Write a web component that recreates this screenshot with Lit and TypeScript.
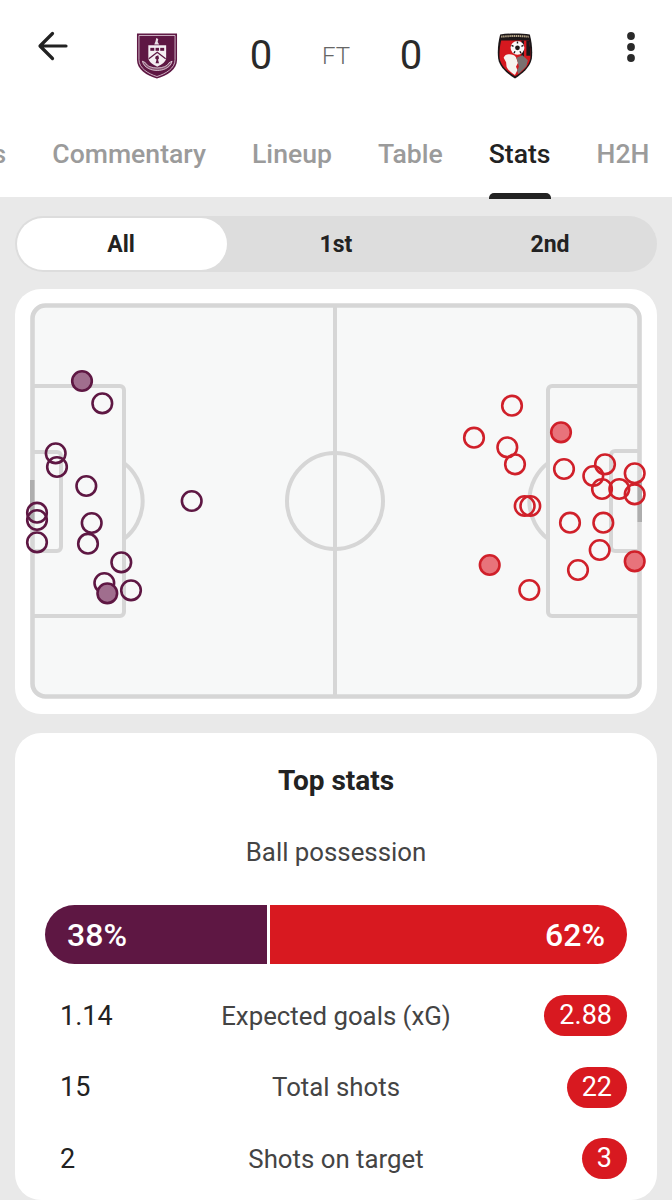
import { LitElement, html, css, svg } from "lit";
import { customElement } from "lit/decorators.js";

type Shot = [number, number, number?];

const HOME: Shot[] = [
  [82, 381, 1], [102.3, 403.3], [55.7, 453.3], [57, 467], [86.3, 486], [191.7, 501],
  [37, 512.7], [37, 520], [37, 542.3], [91.7, 523], [88, 543.7], [121.3, 562.3],
  [104.3, 583], [107.3, 593.3, 1], [131, 590.3],
];
const AWAY: Shot[] = [
  [512, 405.7], [474, 437.7], [507.3, 447.3], [515, 464.3], [561, 432.3, 1], [564, 469],
  [605, 464.3], [593.3, 476], [602, 489], [619.3, 489], [634.7, 473.3], [634.7, 494.3],
  [524.7, 506], [530.3, 506], [570, 522.7], [603.3, 522.7], [599.7, 550], [578, 570],
  [634.7, 561.3, 1], [489.7, 565, 1], [529.3, 590],
];
const ROWS = [
  ["1.14", "Expected goals (xG)", "2.88"],
  ["15", "Total shots", "22"],
  ["2", "Shots on target", "3"],
];
const TABS = ["Events", "Commentary", "Lineup", "Table", "Stats", "H2H"];

const burnley = svg`
  <path d="M0.5 0.5H41V27C41 37 31 43 20.7 46C10.5 43 0.5 37 0.5 27Z" fill="#5e1743"/>
  <path d="M2.5 2.5H39V27C39 35.5 30 41 20.7 44C11.5 41 2.5 35.5 2.5 27Z" fill="none" stroke="#e9d9e3" stroke-width=".8"/>
  <path d="M20 5l2 1-.6 3 1.6 2.6h-5l1.2-3z" fill="#e9dfe5"/>
  <path d="M12 12.5h18v12.5c0 4-4.500 7-9 9-4.500-2-9-5-9-9z" fill="#f4eef2"/>
  <rect x="14" y="15" width="4" height="3" fill="#5e1743"/>
  <rect x="19.300" y="15" width="3.500" height="3" fill="#5e1743"/>
  <rect x="24" y="15" width="4" height="3" fill="#5e1743"/>
  <path d="M12.500 26l8.500-6.500 8.500 6.500" fill="none" stroke="#5e1743" stroke-width="1.300"/>
  <path d="M19.500 23.500l2.500-1 .8 3-1 1.500 1 3.500h-3.500l1-3.500-1.500-1.500z" fill="#5e1743"/>
  <path d="M6 28.500c1 4 3.500 6 6.500 7.500 5 2.500 12 2.500 17 0 3-1.500 5.500-3.500 6.500-7.500l-3 1.500c-1 2-2.500 3-4.500 4-4 1.800-11 1.800-15 0-2-1-3.500-2-4.500-4z" fill="#8a5674" stroke="#efe6ec" stroke-width=".8"/>
`;

const bournemouth = svg`
  <path d="M3.500 1.500C12 .2 25 .2 33.500 1.500 35.500 9 36.500 18 35.500 26 33.500 35 26 41 18.500 46 11 41 3 35 1.500 26 .5 18 1.500 9 3.500 1.500Z" fill="#1c1618"/>
  <path d="M4.500 7.500h28c1.500 6 2 13 1.500 18.500-1.800 8-8.500 13.500-15.500 17.800C11.500 39.500 4.800 34 3 26 2.500 20.500 3 13.500 4.500 7.500Z" fill="#d5181f"/>
  <path d="M25 7.500h2.500v27l-2.500 2.500zM30 7.500h2.500c1.200 5 1.700 10.500 1.600 15.500H30z" fill="#1c1618"/>
  <path d="M4.500 3.800c8-1 20-1 28 0" fill="none" stroke="#b8a88a" stroke-width="2" stroke-dasharray="1.500 .6"/>
  <path d="M7 25c1-3 4-4 6-3.500 3 .5 5 .5 6.500 3l2 5.500-2 4 1.500 3.500-2.500 5c-3.500-2.500-7-5-8.500-8.500l-.5-4.500z" fill="#f6f3ef"/>
  <path d="M20 25l6-2.500 5.500 5-1.500 6-8 8-1.500-3.500 2-4z" fill="#7a7070"/>
  <circle cx="21" cy="15" r="7" fill="#f8f8f8"/>
  <circle cx="21" cy="15" r="2.400" fill="#1c1618"/>
  <path d="M21 8.500v2M15 12.500l2 1M27 12.500l-2 1M17.500 20.500l1-2M24.500 20.500l-1-2" stroke="#1c1618" stroke-width="1.400"/>
`;

@customElement("app-root")
export class AppRoot extends LitElement {
  static styles = css`
    :host {
      display: flex;
      flex-direction: column;
      height: 1200px;
      overflow: hidden;
      background: #e9e9e9;
      font-family: Roboto, "Liberation Sans", sans-serif;
      color: #222;
    }
    .header { background: #fff; height: 197px; flex: none; position: relative; z-index: 1; }
    .top {
      display: grid;
      grid-template-columns: 104px 106px 102px 48px 102px 106px 104px;
      height: 110px;
      align-items: center;
      justify-items: center;
    }
    .back { width: 32px; height: 30px; margin-top: -18px; margin-left: 2px; }
    .crest { width: 42px; height: 46px; margin-top: 2px; display: block; overflow: visible; }
    .crest.away { width: 38px; }
    .score { font-size: 40px; line-height: 48px; color: #2a2a2a; font-weight: 400; margin-top: 1px; }
    .ft { font-size: 24px; font-weight: 300; color: #666; line-height: 30px; margin-top: 2px; }
    .dots { justify-self: end; margin-right: 36px; width: 10px; height: 32px; margin-top: -17px; }
    .tabs { display: flex; gap: 46px; margin-left: -73px; padding-top: 27px; white-space: nowrap; }
    .tab { position: relative; font-size: 26.6px; line-height: 34px; font-weight: 500; color: #9b9b9b; }
    .tab.on { color: #222; }
    .tab.on::after {
      content: "";
      position: absolute;
      left: 0;
      right: 0;
      top: 56px;
      height: 6px;
      background: #222;
      border-radius: 5px 5px 0 0;
    }
    .seg {
      flex: none;
      margin: 19px 15px 0;
      height: 56px;
      box-sizing: border-box;
      padding: 2px;
      border-radius: 28px;
      background: #dddddd;
      display: grid;
      grid-template-columns: 210px 218px 1fr;
    }
    .seg div {
      display: flex;
      align-items: center;
      justify-content: center;
      font-size: 23px;
      font-weight: 700;
      color: #222;
      border-radius: 26px;
    }
    .seg .on { background: #fff; padding-right: 2px; }
    .card { background: #fff; border-radius: 26px; margin: 0 15px; }
    .pitchcard { flex: none; margin-top: 17px; height: 425px; padding: 15px 15px 16px; box-sizing: border-box; }
    .pitch { display: block; width: 612px; height: 394px; overflow: visible; }
    .statcard { flex: 1; margin-top: 19px; padding: 33px 30px 0; text-align: center; }
    h2 { margin: 0; font-size: 28px; line-height: 30px; font-weight: 700; color: #222; }
    .sub { margin-top: 40px; font-size: 25.8px; line-height: 32px; color: #444; }
    .bar { margin-top: 37px; height: 59px; display: flex; gap: 3px; }
    .bar div {
      display: flex;
      align-items: center;
      color: #fff;
      font-size: 32px;
      font-weight: 500;
      box-sizing: border-box;
    }
    .bar .h { width: 222px; flex: none; background: #5e1743; border-radius: 30px 0 0 30px; padding-left: 22px; }
    .bar .a { flex: 1; background: #d81920; border-radius: 0 30px 30px 0; padding-right: 22px; justify-content: flex-end; }
    .rows { margin-top: 31px; display: flex; flex-direction: column; gap: 30.5px; }
    .row { display: grid; grid-template-columns: 1fr auto 1fr; align-items: center; height: 41px; }
    .v { text-align: left; padding-left: 15px; font-size: 27px; color: #222; }
    .l { font-size: 25.8px; color: #444; }
    .p {
      justify-self: end;
      min-width: 15px;
      padding: 0 15px;
      height: 41px;
      line-height: 41px;
      border-radius: 21px;
      background: #d81920;
      color: #fff;
      font-size: 27px;
    }
  `;

  private shots(list: Shot[], stroke: string, fill: string) {
    return list.map(
      ([x, y, f]) => svg`<circle cx=${x} cy=${y} r="9.800" fill=${f ? fill : "none"} stroke=${stroke} stroke-width="2.600"/>`
    );
  }

  render() {
    return html`
      <div class="header">
        <div class="top">
          <svg class="back" viewBox="0 0 32 30" fill="none" stroke="#222" stroke-width="3.200" stroke-linecap="round" stroke-linejoin="round">
            <path d="M29 15H4M15.500 2.500L3 15l12.500 12.500"/>
          </svg>
          <svg class="crest" viewBox="0 0 41.500 46.500">${burnley}</svg>
          <div class="score">0</div>
          <div class="ft">FT</div>
          <div class="score">0</div>
          <svg class="crest away" viewBox="0 0 37 46.500">${bournemouth}</svg>
          <svg class="dots" viewBox="0 0 10 32" fill="#2a2a2a">
            <circle cx="5" cy="5" r="3.900"/><circle cx="5" cy="16" r="3.900"/><circle cx="5" cy="27" r="3.900"/>
          </svg>
        </div>
        <div class="tabs">
          ${TABS.map((t) => html`<div class="tab ${t === "Stats" ? "on" : ""}">${t}</div>`)}
        </div>
      </div>
      <div class="seg">
        <div class="on">All</div><div>1st</div><div>2nd</div>
      </div>
      <div class="card pitchcard">
        <svg class="pitch" viewBox="30 304 612 394">
          <rect x="32.500" y="305.500" width="607" height="391" rx="13" fill="#f7f8f8" stroke="#d6d6d6" stroke-width="4.600"/>
          <g fill="none" stroke="#d6d6d6" stroke-width="4">
            <path d="M335 306V696"/>
            <circle cx="335" cy="501" r="48"/>
            <path d="M32 386H120a4 4 0 0 1 4 4V612a4 4 0 0 1-4 4H32"/>
            <path d="M32 452H57a4 4 0 0 1 4 4V547a4 4 0 0 1-4 4H32"/>
            <path d="M124 463A48 48 0 0 1 124 539"/>
            <path d="M640 386H552a4 4 0 0 0-4 4V612a4 4 0 0 0 4 4H640"/>
            <path d="M640 451H615a4 4 0 0 0-4 4V547a4 4 0 0 0 4 4H640"/>
            <path d="M548 463A48 48 0 0 0 548 539"/>
          </g>
          <rect x="30" y="480" width="4.500" height="42" fill="#aeaeae"/>
          <rect x="637.500" y="480" width="4.500" height="42" fill="#aeaeae"/>
          ${this.shots(HOME, "#5e1743", "#a06e8e")}
          ${this.shots(AWAY, "#d0202a", "#e8737b")}
        </svg>
      </div>
      <div class="card statcard">
        <h2>Top stats</h2>
        <div class="sub">Ball possession</div>
        <div class="bar"><div class="h">38%</div><div class="a">62%</div></div>
        <div class="rows">
          ${ROWS.map(
            ([a, l, b]) => html`<div class="row"><div class="v">${a}</div><div class="l">${l}</div><div class="p">${b}</div></div>`
          )}
        </div>
      </div>
    `;
  }
}
